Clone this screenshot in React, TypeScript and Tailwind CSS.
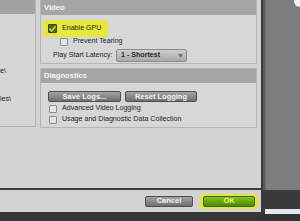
type CheckboxProps = { checked?: boolean };

const textBase = "font-['Liberation_Sans',Arial,sans-serif]";

function Checkbox({ checked = false }: CheckboxProps) {
  if (checked) {
    return (
      <span className="flex h-[9px] w-[9px] shrink-0 items-center justify-center rounded-[1px] border border-[#3a4710] bg-[#55651a]">
        <svg width="7" height="6" viewBox="0 0 7 6" aria-hidden="true">
          <path d="M0.8 3.1 L2.7 5 L6.2 0.8" stroke="#b8e02c" strokeWidth="1.5" fill="none" strokeLinecap="round" />
        </svg>
      </span>
    );
  }
  return <span className="h-[8px] w-[8px] shrink-0 rounded-[1px] border border-[#8a8a8a] bg-[#e4e4e4]" />;
}

type ButtonProps = { label: string; width: string; variant?: "gray" | "green" };

const buttonVariants = {
  gray: "border-[#4e4e4e] from-[#a4a4a4] to-[#707070] text-[#f3f3f3]",
  green: "border-[#3b6a06] from-[#86c41e] to-[#4a880a] text-[#eef36a]",
};

function DialogButton({ label, width, variant = "gray" }: ButtonProps) {
  return (
    <div
      className={`flex h-[11px] ${width} shrink-0 items-center justify-center rounded-[2px] border bg-gradient-to-b text-[7.5px] font-bold leading-none ${buttonVariants[variant]}`}
    >
      {label}
    </div>
  );
}

function PanelHeader({ title, height }: { title: string; height: string }) {
  return (
    <div className={`flex ${height} shrink-0 items-center bg-[#a5a5a5] pl-[3px] text-[7.6px] font-bold leading-none text-[#f6f6f6]`}>
      {title}
    </div>
  );
}

function CheckRow({ label, className = "" }: { label: string; className?: string }) {
  return (
    <div className={`flex h-[8px] items-center gap-[5px] ${className}`}>
      <Checkbox />
      <span className="text-[7.1px] leading-none text-[#1d1d1d]">{label}</span>
    </div>
  );
}

export default function App() {
  return (
    <div className={`flex h-[221px] w-[300px] overflow-hidden bg-[#383838] ${textBase}`}>
      {/* dialog */}
      <div className="flex w-[261px] shrink-0 flex-col">
        <div className="flex h-[188px] shrink-0 gap-[4px] bg-[#d3d3d3] pr-[4px]">
          {/* left panel, cut off */}
          <div className="flex h-[127px] w-[36px] shrink-0 flex-col border-r border-b border-[#b3b3b3] bg-[#d6d6d6]">
            <div className="h-[14px] shrink-0 bg-[#a3a3a3]" />
            <div className="flex flex-col pt-[53px] text-[7.1px] leading-[9px] text-[#1d1d1d]">
              <span>e\</span>
              <span className="mt-[19px]">ies\</span>
            </div>
          </div>

          <div className="flex w-[217px] shrink-0 flex-col gap-[4px]">
            {/* Video */}
            <div className="flex h-[64px] shrink-0 flex-col border-x border-b border-[#b5b5b5] bg-[#d7d7d7]">
              <PanelHeader title="Video" height="h-[15px]" />
              <div className="ml-[2px] mt-[5px] flex h-[17px] w-[65px] items-center gap-[5px] rounded-[3px] bg-[#e6e83c] pl-[5px]">
                <Checkbox checked />
                <span className="text-[7.1px] leading-none text-[#1a1a1a]">Enable GPU</span>
              </div>
              <CheckRow label="Prevent Tearing" className="ml-[19px] mt-[1px]" />
              <div className="ml-[12px] mt-[3px] flex h-[13px] items-center">
                <span className="w-[63px] shrink-0 text-[7.1px] leading-none text-[#1d1d1d]">Play Start Latency:</span>
                <div className="flex h-[13px] w-[71px] items-center justify-between rounded-[2px] border border-[#8c8c8c] bg-gradient-to-b from-[#cdcdcd] to-[#a9a9a9] pl-[4px] pr-[3px]">
                  <span className="text-[7.1px] font-bold leading-none text-[#262626]">1 - Shortest</span>
                  <svg width="5" height="4" viewBox="0 0 5 4" aria-hidden="true">
                    <path d="M0 0 L5 0 L2.5 3.5 Z" fill="#6a6a6a" />
                  </svg>
                </div>
              </div>
            </div>

            {/* Diagnostics */}
            <div className="flex h-[60px] shrink-0 flex-col border border-[#b5b5b5] bg-[#d7d7d7]">
              <PanelHeader title="Diagnostics" height="h-[14px]" />
              <div className="ml-[7px] mt-[8px] flex gap-[4px]">
                <DialogButton label="Save Logs..." width="w-[73px]" />
                <DialogButton label="Reset Logging" width="w-[72px]" />
              </div>
              <CheckRow label="Advanced Video Logging" className="ml-[8px] mt-[3px]" />
              <CheckRow label="Usage and Diagnostic Data Collection" className="ml-[8px] mt-[3px]" />
            </div>
          </div>
        </div>

        <div className="h-[2px] shrink-0 bg-[#3f3f3f]" />

        {/* footer */}
        <div className="flex h-[22px] shrink-0 items-center justify-end gap-[7px] bg-[#d2d2d2] pr-[3px]">
          <DialogButton label="Cancel" width="w-[48px]" />
          <div className="flex rounded-[3px] bg-[#e3e63a] px-[3px] py-[2px]">
            <DialogButton label="OK" width="w-[52px]" variant="green" />
          </div>
        </div>

        <div className="flex-1 bg-[#363636]" />
      </div>

      {/* area outside the dialog */}
      <div className="flex flex-1 flex-col">
        <div className="relative flex h-[190px] shrink-0">
          <div className="w-[2px] bg-[#3a3a3a]" />
          <div className="w-[2px] bg-[#5b5b5b]" />
          <div className="w-[1px] bg-[#6f6f6f]" />
          <div className="flex-1 bg-[#7d7d7d]" />
          <div className="absolute right-0 top-0 h-[7px] w-[6px] rounded-bl-[6px] bg-[#f2f2f2]" />
        </div>
        <div className="h-[19px] shrink-0 bg-[#3a3a3a]" />
        <div className="ml-[4px] h-[5px] shrink-0 bg-[#e3e8ee]" />
        <div className="flex-1 bg-[#333333]" />
      </div>
    </div>
  );
}
